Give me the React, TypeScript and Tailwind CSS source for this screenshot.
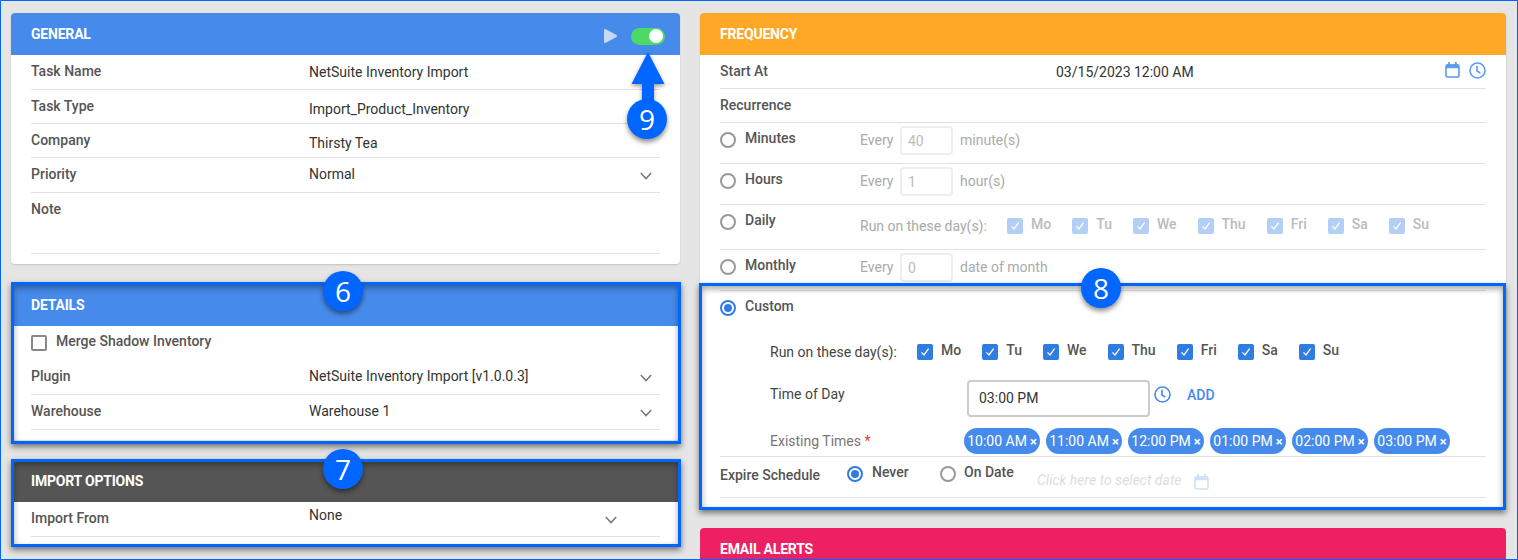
import type { ReactNode } from "react";

const Chevron = ({ className = "" }: { className?: string }) => (
  <svg className={`h-[8px] w-[12px] ${className}`} viewBox="0 0 12 8" fill="none" stroke="#777" strokeWidth="1.5">
    <path d="M0.8 1 L6 6.6 L11.2 1" />
  </svg>
);

const CalendarIcon = ({ className = "" }: { className?: string }) => (
  <svg className={className} viewBox="0 0 15 16" fill="none">
    <rect x="1" y="3" width="13" height="12" rx="1.5" stroke="currentColor" strokeWidth="1.6" />
    <rect x="1" y="2.4" width="13" height="3.8" fill="currentColor" />
    <rect x="3.2" y="0" width="1.8" height="3" fill="currentColor" />
    <rect x="10" y="0" width="1.8" height="3" fill="currentColor" />
  </svg>
);

const ClockIcon = ({ className = "" }: { className?: string }) => (
  <svg className={className} viewBox="0 0 17 17" fill="none" stroke="currentColor" strokeWidth="1.6">
    <circle cx="8.5" cy="8.5" r="7.5" />
    <path d="M8 3.8 V9 L11.4 11.2" />
  </svg>
);

const Radio = ({ on = false }: { on?: boolean }) => (
  <span
    className={`mt-[9px] flex h-4 w-4 shrink-0 items-center justify-center rounded-full border-2 ${
      on ? "border-[#2f7de1]" : "border-[#999]"
    }`}
  >
    {on && <span className="h-2 w-2 rounded-full bg-[#2f7de1]" />}
  </span>
);

const Check = ({ disabled = false }: { disabled?: boolean }) => (
  <span
    className={`flex h-4 w-4 shrink-0 items-center justify-center rounded-[2px] ${
      disabled ? "bg-[#b4cff5]" : "bg-[#2f7de1]"
    }`}
  >
    <svg className="h-[10px] w-[10px]" viewBox="0 0 10 10" fill="none" stroke="#fff" strokeWidth="1.3">
      <path d="M1.5 5.4 L4 8 L8.6 1.6" />
    </svg>
  </span>
);

const days = ["Mo", "Tu", "We", "Thu", "Fri", "Sa", "Su"];

const DayChecks = ({ disabled = false }: { disabled?: boolean }) => (
  <div className="flex gap-[21px]">
    {days.map((day) => (
      <div key={day} className="flex gap-2">
        <Check disabled={disabled} />
        <span className={`-mt-[4px] font-medium leading-5 ${disabled ? "text-[#bbb]" : "text-[#555]"}`}>{day}</span>
      </div>
    ))}
  </div>
);

const Badge = ({ n, className }: { n: number; className: string }) => (
  <div
    className={`absolute z-20 flex h-10 w-10 items-center justify-center rounded-full bg-[#0066ff] font-['Open_Sans',sans-serif] text-[28px] leading-none text-white shadow-[0_3px_5px_rgba(0,0,0,0.45)] ${className}`}
  >
    {n}
  </div>
);

const Annotation = ({ className }: { className: string }) => (
  <div
    className={`pointer-events-none absolute z-10 border-[3px] border-[#0066ff] shadow-[0_3px_6px_rgba(0,0,0,0.5),inset_0_3px_6px_rgba(0,0,0,0.35)] ${className}`}
  />
);

const Header = ({ title, color, children }: { title: string; color: string; children?: ReactNode }) => (
  <div className={`flex h-[42px] items-center justify-between rounded-t-[4px] px-5 ${color}`}>
    <span className="text-sm font-bold tracking-[-0.2px] text-white">{title}</span>
    {children}
  </div>
);

const Row = ({
  label,
  value,
  height,
  pt = "pt-[6px]",
  valueClass = "",
  chevron,
}: {
  label: string;
  value?: string;
  height: string;
  pt?: string;
  valueClass?: string;
  chevron?: string;
}) => (
  <div className={`flex border-b border-[#e2e2e2] ${height} ${pt}`}>
    <span className="w-[278px] font-medium leading-5 text-[#555]">{label}</span>
    <span className={`leading-5 text-[#333] ${valueClass}`}>{value}</span>
    {chevron && <Chevron className={`ml-auto ${chevron}`} />}
  </div>
);

const Option = ({
  label,
  height,
  children,
}: {
  label: string;
  height: string;
  children: ReactNode;
}) => (
  <div className={`flex border-b border-[#e2e2e2] ${height}`}>
    <Radio />
    <span className="ml-[9px] mt-[5px] w-[115px] font-medium leading-5 text-[#555]">{label}</span>
    {children}
  </div>
);

const EveryInput = ({ value, unit }: { value: string; unit: string }) => (
  <div className="flex items-start">
    <span className="mt-[7px] w-[40px] leading-5 text-[#aaa]">Every</span>
    <span className="mt-[3px] flex h-[29px] w-[53px] items-center rounded-[4px] border-2 border-[#eee] pl-[6px] text-[#bbb]">
      {value}
    </span>
    <span className="ml-[7px] mt-[7px] leading-5 text-[#aaa]">{unit}</span>
  </div>
);

const times = ["10:00 AM", "11:00 AM", "12:00 PM", "01:00 PM", "02:00 PM", "03:00 PM"];

export default function App() {
  return (
    <div className="flex h-[560px] gap-5 overflow-hidden border border-[#0066ff] bg-[#e5e5e5] pl-[10px] pt-3 font-['Roboto',sans-serif] text-sm">
      {/* left column */}
      <div className="flex w-[669px] shrink-0 flex-col gap-5">
        <div className="relative rounded-[4px] bg-white shadow-[0_1px_2px_rgba(0,0,0,0.15)]">
          <Header title="GENERAL" color="bg-[#468bec]">
            <div className="mt-[4px] flex items-center gap-[14px] -mr-[5px]">
              <svg className="h-[14px] w-[13px]" viewBox="0 0 13 14" fill="#c5d9f8" stroke="#c5d9f8" strokeWidth="2" strokeLinejoin="round">
                <path d="M1 1 L12 7 L1 13 Z" />
              </svg>
              <span className="flex h-[17px] w-[34px] items-center justify-end rounded-full bg-[#4cd964] pr-[2px]">
                <span className="h-[14px] w-[14px] rounded-full bg-white" />
              </span>
            </div>
          </Header>
          <div className="px-5 pb-[10px]">
            <Row label="Task Name" value="NetSuite Inventory Import" height="h-[35px]" valueClass="mt-[1px]" />
            <Row label="Task Type" value="Import_Product_Inventory" height="h-[34px]" valueClass="mt-[3px]" />
            <Row label="Company" value="Thirsty Tea" height="h-[34px]" valueClass="mt-[3px]" />
            <Row label="Priority" value="Normal" height="h-[35px]" chevron="mt-[8px] mr-[8px]" />
            <Row label="Note" height="h-[61px]" />
          </div>
          {/* arrow pointing at the toggle */}
          <svg
            className="absolute left-[619px] top-[38px] z-20 h-[56px] w-[36px] drop-shadow-[0_2px_2px_rgba(0,0,0,0.4)]"
            viewBox="0 0 36 56"
            fill="#0066ff"
          >
            <path d="M18 1 L34.5 33 H24 V56 H12 V33 H1.5 Z" />
          </svg>
          <Badge n={9} className="left-[616px] top-[86px]" />
        </div>

        <div className="relative rounded-[4px] bg-white">
          <Annotation className="-bottom-[4px] -left-0 -right-[1px] -top-[2px]" />
          <Badge n={6} className="left-[312px] -top-[13px]" />
          <Header title="DETAILS" color="bg-[#468bec]" />
          <div className="px-5 pb-[10px]">
            <div className="flex h-[33px] items-center gap-[9px]">
              <span className="h-4 w-4 rounded-[2px] border-2 border-[#888]" />
              <span className="-mt-[4px] font-medium text-[#555]">Merge Shadow Inventory</span>
            </div>
            <Row
              label="Plugin"
              value="NetSuite Inventory Import [v1.0.0.3]"
              height="h-[36px]"
              pt="pt-[7px]"
              chevron="mt-[8px] mr-[8px]"
            />
            <Row label="Warehouse" value="Warehouse 1" height="h-[35px]" chevron="mt-[8px] mr-[8px]" />
          </div>
        </div>

        <div className="relative rounded-[4px] bg-white">
          <Annotation className="-top-[1px] bottom-0 left-0 -right-[1px]" />
          <Badge n={7} className="left-[312px] -top-[11px]" />
          <Header title="IMPORT OPTIONS" color="bg-[#555]" />
          <div className="px-5 pb-[10px]">
            <Row label="Import From" value="None" height="h-[35px]" valueClass="-mt-[3px]" chevron="mt-[8px] mr-[43px]" />
          </div>
        </div>
      </div>

      {/* right column */}
      <div className="flex w-[806px] shrink-0 flex-col gap-5">
        <div className="relative rounded-[4px] bg-white shadow-[0_1px_2px_rgba(0,0,0,0.15)]">
          <Annotation className="-bottom-[2px] -left-[1px] right-0 top-[270px]" />
          <Badge n={8} className="left-[381px] top-[255px]" />
          <Header title="FREQUENCY" color="bg-[#ffa726]" />
          <div className="px-5 pb-[10px]">
            <div className="flex h-[34px] border-b border-[#e2e2e2] pt-[6px]">
              <span className="w-[336px] font-medium leading-5 text-[#555]">Start At</span>
              <span className="mt-[1px] leading-5 text-[#333]">03/15/2023 12:00 AM</span>
              <div className="mt-[1px] ml-auto flex items-start gap-[9px] text-[#5c9bf0]">
                <CalendarIcon className="h-4 w-[15px]" />
                <ClockIcon className="h-[17px] w-[17px]" />
              </div>
            </div>
            <div className="h-[34px] border-b border-[#e2e2e2] pt-[6px] font-medium leading-5 text-[#555]">Recurrence</div>
            <Option label="Minutes" height="h-[41px]">
              <EveryInput value="40" unit="minute(s)" />
            </Option>
            <Option label="Hours" height="h-[41px]">
              <EveryInput value="1" unit="hour(s)" />
            </Option>
            <Option label="Daily" height="h-[45px]">
              <span className="mt-[11px] w-[147px] leading-5 text-[#aaa]">Run on these day(s):</span>
              <div className="mt-[13px]">
                <DayChecks disabled />
              </div>
            </Option>
            <Option label="Monthly" height="h-[41px]">
              <EveryInput value="0" unit="date of month" />
            </Option>

            <div className="border-b border-[#e2e2e2] pb-[2px]">
              <div className="flex h-[44px]">
                <Radio on />
                <span className="ml-[9px] mt-[5px] font-medium leading-5 text-[#555]">Custom</span>
              </div>
              <div className="flex h-[34px] items-center pl-[50px]">
                <span className="w-[147px] leading-5 text-[#444]">Run on these day(s):</span>
                <DayChecks />
              </div>
              <div className="mt-[11px] flex h-[37px] items-start pl-[50px]">
                <span className="mt-[4px] w-[197px] leading-5 text-[#444]">Time of Day</span>
                <span className="flex h-[37px] w-[183px] items-center rounded-[4px] border-2 border-[#ccc] pb-[2px] pl-[10px] text-[#333]">
                  03:00 PM
                </span>
                <ClockIcon className="ml-[4px] mt-[6px] h-[17px] w-[17px] text-[#468bec]" />
                <span className="ml-[16px] mt-[5px] font-medium leading-5 text-[#468bec]">ADD</span>
              </div>
              <div className="mt-[11px] flex h-[26px] items-center pl-[50px]">
                <span className="w-[194px] text-[#777]">
                  Existing Times <span className="text-[#e53935]">*</span>
                </span>
                <div className="flex gap-[6px]">
                  {times.map((time) => (
                    <span
                      key={time}
                      className="flex h-[26px] w-[76px] items-center justify-center gap-[3px] rounded-full bg-[#468bec] text-white"
                    >
                      {time}
                      <span className="text-[13px] font-bold leading-none">×</span>
                    </span>
                  ))}
                </div>
              </div>
            </div>

            <div className="flex h-[41px] border-b border-[#e2e2e2]">
              <span className="mt-[8px] w-[127px] font-medium leading-5 text-[#555]">Expire Schedule</span>
              <Radio on />
              <span className="ml-[9px] mt-[5px] w-[68px] font-medium leading-5 text-[#555]">Never</span>
              <Radio />
              <span className="ml-[8px] mt-[5px] w-[73px] font-medium leading-5 text-[#555]">On Date</span>
              <span className="mt-[13px] w-[157px] italic leading-5 text-[#ddd]">Click here to select date</span>
              <CalendarIcon className="mt-[17px] h-4 w-[15px] text-[#cfe0f8]" />
            </div>
          </div>
        </div>

        <div className="rounded-[4px] bg-white">
          <Header title="EMAIL ALERTS" color="bg-[#ec2062]" />
        </div>
      </div>
    </div>
  );
}
